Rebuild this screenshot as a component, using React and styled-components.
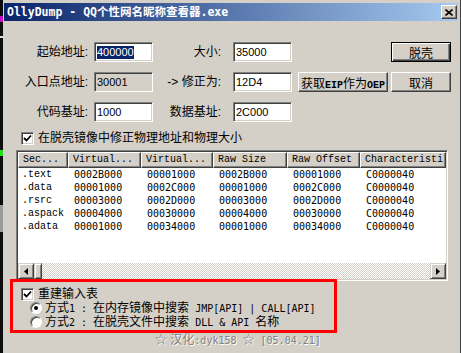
import React from "react";
import styled, { createGlobalStyle } from "styled-components";

const cjk = `"Liberation Sans", "Noto Sans CJK SC", sans-serif`;
const mono = `"DejaVu Sans Mono", "Noto Sans CJK SC", monospace`;
const courier = `"Liberation Mono", monospace`;
const face = "#d4d0c8";

const GlobalStyle = createGlobalStyle`
  html, body {
    margin: 0;
    background: #111;
    overflow: hidden;
  }
`;

const sections = [
  [".text", "0002B000", "00001000", "0002B000", "00001000", "C0000040"],
  [".data", "00001000", "0002C000", "00001000", "0002C000", "C0000040"],
  [".rsrc", "00003000", "0002D000", "00003000", "0002D000", "C0000040"],
  [".aspack", "00004000", "00030000", "00004000", "00030000", "C0000040"],
  [".adata", "00001000", "00034000", "00001000", "00034000", "C0000040"],
];

const headers = ["Sec...", "Virtual...", "Virtual...", "Raw Size", "Raw Offset", "Characteristi"];

const Check = () => (
  <Box>
    <svg width="9" height="9" viewBox="0 0 9 9">
      <polyline points="1,4 3.5,6.5 8,1.5" fill="none" stroke="#000" strokeWidth="1.8" />
    </svg>
  </Box>
);

const App = () => {
  return (
    <Screen>
      <GlobalStyle />
      <BackStrip />
      <Win>
        <TitleBar>
          <TitleText>OllyDump - QQ个性网名昵称查看器.exe</TitleText>
          <CloseBtn>
            <svg width="8" height="7" viewBox="0 0 8 7">
              <path d="M0.5 0.5 L7.5 6.5 M7.5 0.5 L0.5 6.5" stroke="#000" strokeWidth="1.6" />
            </svg>
          </CloseBtn>
        </TitleBar>

        <Form>
          <Label $pad={6}>起始地址:</Label>
          <Field>
            <Sel>400000</Sel>
          </Field>
          <Label $pad={12}>大小:</Label>
          <Field>35000</Field>
          <Btn $col={7} $default>
            脱壳
          </Btn>

          <Label $pad={6}>入口点地址:</Label>
          <Field $disabled>30001</Field>
          <Label $pad={12}>-&gt; 修正为:</Label>
          <Field>12D4</Field>
          <Btn $col={5} $w={90}>
            获取<Latin>EIP</Latin>作为<Latin>OEP</Latin>
          </Btn>
          <Btn $col={7}>取消</Btn>

          <Label $pad={6}>代码基址:</Label>
          <Field>1000</Field>
          <Label $pad={12}>数据基址:</Label>
          <Field>2C000</Field>
        </Form>

        <CheckRow $top={9} $left={17}>
          <Check />
          <CheckText>在脱壳镜像中修正物理地址和物理大小</CheckText>
        </CheckRow>

        <List>
          <Header>
            {headers.map((h, i) => (
              <HeadCell key={i}>{h}</HeadCell>
            ))}
          </Header>
          <Rows>
            {sections.map((row) => (
              <Row key={row[0]}>
                {row.map((c, i) => (
                  <Cell key={i} $name={i === 0}>
                    {c}
                  </Cell>
                ))}
              </Row>
            ))}
          </Rows>
          <HScroll>
            <ArrowBtn>
              <svg width="4" height="7" viewBox="0 0 4 7">
                <path d="M4 0 L0 3.5 L4 7 Z" fill="#000" />
              </svg>
            </ArrowBtn>
            <Thumb />
            <Track />
            <ArrowBtn>
              <svg width="4" height="7" viewBox="0 0 4 7">
                <path d="M0 0 L4 3.5 L0 7 Z" fill="#000" />
              </svg>
            </ArrowBtn>
          </HScroll>
        </List>

        <Options>
          <CheckRow $top={0} $left={0}>
            <Check />
            <CheckText>重建输入表</CheckText>
          </CheckRow>
          <RadioRow>
            <Radio $on />
            <OptText>
              方式<Latin $plain>1 : </Latin>在内存镜像中搜索<Latin $plain> JMP[API] | CALL[API]</Latin>
            </OptText>
          </RadioRow>
          <RadioRow>
            <Radio />
            <OptText>
              方式<Latin $plain>2 : </Latin>在脱壳文件中搜索<Latin $plain> DLL &amp; API </Latin>名称
            </OptText>
          </RadioRow>
        </Options>

        <Footer>
          ☆ 汉化<Latin $plain>:dyk158 </Latin>☆<Latin $plain> [05.04.21]</Latin>
        </Footer>

        <Highlight />
      </Win>
    </Screen>
  );
};

const Screen = styled.div`
  display: flex;
  width: 461px;
  height: 353px;
`;
const BackStrip = styled.div`
  width: 3px;
  flex: none;
  background: linear-gradient(
    #0d0d0d 0 16px,
    #c010c0 16px 22px,
    #0d0d0d 22px 36px,
    #e0e0e0 36px 38px,
    #0d0d0d 38px 150px,
    #20e020 150px 156px,
    #0d0d0d 156px 205px,
    #9a9a9a 205px 232px,
    #0d0d0d 232px
  );
`;
const Win = styled.div`
  position: relative;
  flex: 1;
  display: flex;
  flex-direction: column;
  background: ${face};
  padding: 3px 2px 0 1px;
  border-right: 1px solid #404040;
  font-family: ${cjk};
  font-size: 12px;
  color: #000;
`;
const TitleBar = styled.div`
  height: 18px;
  display: flex;
  align-items: center;
  justify-content: space-between;
  padding: 0 1px 0 3px;
  background: linear-gradient(to right, #0a246a, #a6caf0);
`;
const TitleText = styled.div`
  font-family: ${mono};
  font-weight: bold;
  font-size: 11.5px;
  color: #fff;
  white-space: nowrap;
  line-height: 14px;
`;
const CloseBtn = styled.div`
  width: 16px;
  height: 14px;
  box-sizing: border-box;
  display: flex;
  align-items: center;
  justify-content: center;
  background: ${face};
  border: 1px solid;
  border-color: #fff #404040 #404040 #fff;
  box-shadow: inset -1px -1px #808080;
`;
const Form = styled.div`
  margin-top: 21px;
  display: grid;
  grid-template-columns: 90px 59px 80px 59px 96px 3px 60px;
  grid-auto-rows: 20px;
  row-gap: 10px;
`;
const Label = styled.div`
  justify-self: end;
  align-self: center;
  padding-right: ${(p) => p.$pad}px;
  white-space: nowrap;
  line-height: 14px;
`;
const Field = styled.div`
  box-sizing: border-box;
  height: 20px;
  border: 1px solid;
  border-color: #808080 #fff #fff #808080;
  box-shadow: inset 1px 1px #404040, inset -1px -1px ${face};
  background: ${(p) => (p.$disabled ? face : "#fff")};
  padding: 0 2px;
  display: flex;
  align-items: center;
  font-family: "Liberation Sans", sans-serif;
  font-size: 11px;
`;
const Sel = styled.span`
  background: #0a246a;
  color: #fff;
  line-height: 13px;
`;
const Btn = styled.button`
  grid-column: ${(p) => p.$col};
  justify-self: end;
  width: ${(p) => p.$w || 60}px;
  height: 20px;
  box-sizing: border-box;
  padding: 0;
  background: ${face};
  font-family: ${cjk};
  font-size: 12px;
  color: #000;
  white-space: nowrap;
  border: 1px solid;
  border-color: ${(p) => (p.$default ? "#000" : "#fff #404040 #404040 #fff")};
  box-shadow: ${(p) =>
    p.$default
      ? "inset 1px 1px #fff, inset -1px -1px #404040, inset -2px -2px #808080"
      : "inset -1px -1px #808080"};
`;
const Latin = styled.span`
  font-family: ${(p) => (p.$plain ? mono : courier)};
  font-size: 10px;
  font-weight: ${(p) => (p.$plain ? "normal" : "bold")};
  white-space: pre;
`;
const CheckRow = styled.div`
  margin-top: ${(p) => p.$top}px;
  padding-left: ${(p) => p.$left}px;
  height: 14px;
  display: flex;
  align-items: center;
  gap: 4px;
`;
const Box = styled.div`
  width: 13px;
  height: 13px;
  box-sizing: border-box;
  flex: none;
  background: #fff;
  border: 1px solid;
  border-color: #808080 #fff #fff #808080;
  box-shadow: inset 1px 1px #404040, inset -1px -1px ${face};
  display: flex;
  align-items: center;
  justify-content: center;
`;
const CheckText = styled.span`
  line-height: 14px;
  white-space: nowrap;
`;
const List = styled.div`
  margin: 5px 0 0 12px;
  width: 432px;
  height: 131px;
  box-sizing: border-box;
  padding: 1px;
  border: 1px solid;
  border-color: #808080 #fff #fff #808080;
  box-shadow: inset 1px 1px #404040, inset -1px -1px ${face};
  display: flex;
  flex-direction: column;
  overflow: hidden;
`;
const cols = "50px 73px 72px 74px 73px 1fr";
const Header = styled.div`
  display: grid;
  grid-template-columns: ${cols};
  height: 16px;
  flex: none;
`;
const HeadCell = styled.div`
  box-sizing: border-box;
  background: ${face};
  border: 1px solid;
  border-color: #fff #404040 #404040 #fff;
  box-shadow: inset -1px -1px #808080;
  padding-left: 4px;
  font-family: ${courier};
  font-size: 10px;
  line-height: 14px;
  white-space: nowrap;
  overflow: hidden;
`;
const Rows = styled.div`
  flex: 1;
  background: #fff;
`;
const Row = styled.div`
  display: grid;
  grid-template-columns: ${cols};
  height: 13px;
`;
const Cell = styled.div`
  padding-left: ${(p) => (p.$name ? 4 : 6)}px;
  font-family: ${(p) => (p.$name ? courier : mono)};
  font-size: 10px;
  line-height: 13px;
  white-space: nowrap;
  overflow: hidden;
`;
const HScroll = styled.div`
  height: 16px;
  flex: none;
  display: flex;
`;
const raised = `
  box-sizing: border-box;
  background: ${face};
  border: 1px solid;
  border-color: ${face} #404040 #404040 ${face};
  box-shadow: inset 1px 1px #fff, inset -1px -1px #808080;
`;
const ArrowBtn = styled.div`
  ${raised}
  width: 16px;
  display: flex;
  align-items: center;
  justify-content: center;
`;
const Thumb = styled.div`
  ${raised}
  width: 8px;
`;
const Track = styled.div`
  flex: 1;
  background-color: ${face};
  background-image: conic-gradient(#fff 25%, ${face} 0 50%, #fff 0 75%, ${face} 0);
  background-size: 2px 2px;
`;
const Options = styled.div`
  margin-top: 6px;
  padding-left: 17px;
`;
const RadioRow = styled.div`
  height: 14px;
  padding-left: 9px;
  display: flex;
  align-items: center;
  gap: 3px;
`;
const Radio = styled.div`
  width: 12px;
  height: 12px;
  box-sizing: border-box;
  flex: none;
  border-radius: 50%;
  background: #fff;
  border: 1px solid;
  border-color: #808080 #fff #fff #808080;
  box-shadow: inset 1px 1px #404040;
  display: flex;
  align-items: center;
  justify-content: center;
  &::after {
    content: "";
    display: ${(p) => (p.$on ? "block" : "none")};
    width: 4px;
    height: 4px;
    border-radius: 50%;
    background: #000;
  }
`;
const OptText = styled.span`
  line-height: 14px;
  white-space: nowrap;
`;
const Footer = styled.div`
  margin-top: 4px;
  padding-left: 151px;
  height: 14px;
  line-height: 14px;
  color: #808080;
  text-shadow: 1px 1px #fff;
  white-space: nowrap;
`;
const Highlight = styled.div`
  position: absolute;
  left: 7px;
  top: 279px;
  width: 327px;
  height: 54px;
  box-sizing: border-box;
  border: 3px solid #ff0000;
  pointer-events: none;
`;

export default App;
